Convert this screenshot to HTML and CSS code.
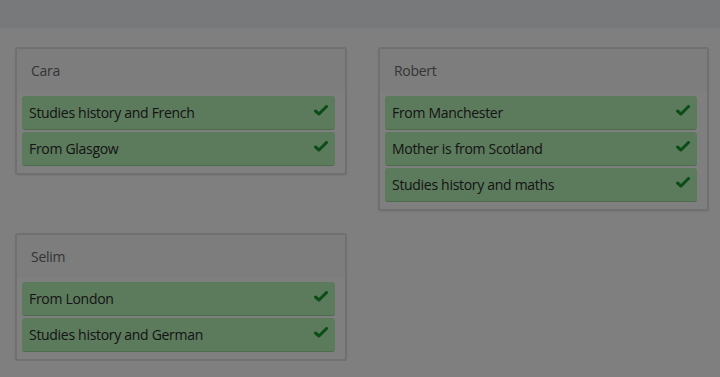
FILE: index.html
```html
<!DOCTYPE html>
<html lang="en">
<head>
    <meta charset="UTF-8">
    <meta name="viewport" content="width=device-width, initial-scale=1.0">
    <title>Who is who</title>
    <link rel="stylesheet" href="styles.css">
</head>
<body>

    <header class="topbar"></header>

    <main class="board">

        <section class="panel">
            <h2 class="panel-title">Cara</h2>
            <ul class="facts">
                <li class="fact">Studies history and French <svg class="tick" viewBox="0 0 14 11"><path d="M1.5 6 L5 9 L12.5 1.5"/></svg></li>
                <li class="fact">From Glasgow <svg class="tick" viewBox="0 0 14 11"><path d="M1.5 6 L5 9 L12.5 1.5"/></svg></li>
            </ul>
        </section>

        <section class="panel">
            <h2 class="panel-title">Robert</h2>
            <ul class="facts">
                <li class="fact">From Manchester <svg class="tick" viewBox="0 0 14 11"><path d="M1.5 6 L5 9 L12.5 1.5"/></svg></li>
                <li class="fact">Mother is from Scotland <svg class="tick" viewBox="0 0 14 11"><path d="M1.5 6 L5 9 L12.5 1.5"/></svg></li>
                <li class="fact">Studies history and maths <svg class="tick" viewBox="0 0 14 11"><path d="M1.5 6 L5 9 L12.5 1.5"/></svg></li>
            </ul>
        </section>

        <section class="panel">
            <h2 class="panel-title">Selim</h2>
            <ul class="facts">
                <li class="fact">From London <svg class="tick" viewBox="0 0 14 11"><path d="M1.5 6 L5 9 L12.5 1.5"/></svg></li>
                <li class="fact">Studies history and German <svg class="tick" viewBox="0 0 14 11"><path d="M1.5 6 L5 9 L12.5 1.5"/></svg></li>
            </ul>
        </section>

    </main>

    <!-- modal backdrop dimming the page -->
    <div class="backdrop"></div>

</body>
</html>
```

FILE: styles.css
```css
body {
    font-family: 'Open Sans', sans-serif;
    margin: 0;
    padding: 0;
    background-color: #fff;
    color: #333;
    font-size: 14px;
    letter-spacing: -0.3px;
}

.topbar {
    height: 28px;
    background-color: #f1f2f4;
}

.board {
    display: grid;
    grid-template-columns: 332px 331px;
    column-gap: 31px;
    row-gap: 22px;
    align-items: start;
    padding: 19px 11px 0 15px;
}

.panel {
    border: 2px solid #e0e0e0;
    border-radius: 3px;
    background-color: #fff;
    box-shadow: 0 1px 2px rgba(0, 0, 0, 0.08);
}

.panel-title {
    margin: 0;
    padding: 0 14px;
    height: 43px;
    line-height: 43px;
    font-size: 14px;
    font-weight: normal;
    color: #6a6a6a;
    background-color: #fafafa;
}

.facts {
    list-style: none;
    margin: 0;
    padding: 4px 10px 7px 5px;
    display: flex;
    flex-direction: column;
    gap: 2px;
}

.fact {
    display: flex;
    align-items: center;
    justify-content: space-between;
    height: 33px;
    padding: 0 7px;
    background-color: #b8f4b8;
    border-bottom: 1px solid #98d898;
    border-radius: 3px;
    color: #2a2a2a;
}

.tick {
    width: 14px;
    height: 11px;
    margin-top: -4px;
}

.tick path {
    fill: none;
    stroke: #179a2d;
    stroke-width: 3;
    stroke-linecap: round;
    stroke-linejoin: round;
}

.backdrop {
    position: fixed;
    inset: 0;
    background-color: rgba(0, 0, 0, 0.5);
}
```
